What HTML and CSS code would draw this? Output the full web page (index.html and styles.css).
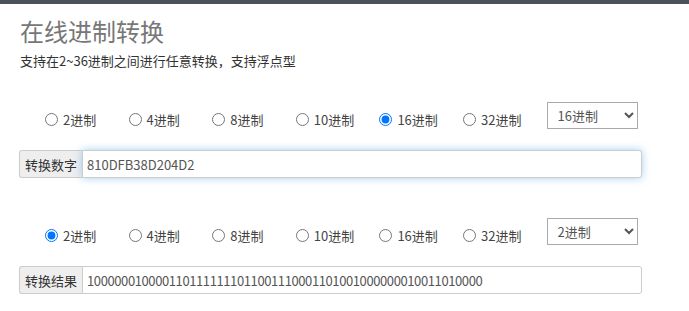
FILE: index.html
```html
<!DOCTYPE html>
<html>
    <head>
        <meta charset="utf-8">
        <meta name="viewport" content="width=device-width, initial-scale=1.0">
        <title>在线进制转换</title>
        <link rel="stylesheet" href="styles.css">
    </head>
    <body>
        <div class="topbar"></div>

        <div class="content">
            <h1 class="title">在线进制转换</h1>
            <p class="desc">支持在2~36进制之间进行任意转换，支持浮点型</p>

            <!-- source number -->
            <div class="radio-row">
                <div class="radio-list">
                    <label class="radio"><input type="radio" name="from"><span>2进制</span></label>
                    <label class="radio"><input type="radio" name="from"><span>4进制</span></label>
                    <label class="radio"><input type="radio" name="from"><span>8进制</span></label>
                    <label class="radio"><input type="radio" name="from"><span>10进制</span></label>
                    <label class="radio"><input type="radio" name="from" checked><span>16进制</span></label>
                    <label class="radio"><input type="radio" name="from"><span>32进制</span></label>
                </div>
                <select class="base-select">
                    <option>16进制</option>
                </select>
            </div>
            <div class="input-group">
                <span class="addon">转换数字</span>
                <input class="field field-focus" type="text" value="810DFB38D204D2">
            </div>

            <!-- result -->
            <div class="radio-row row-result">
                <div class="radio-list">
                    <label class="radio"><input type="radio" name="to" checked><span>2进制</span></label>
                    <label class="radio"><input type="radio" name="to"><span>4进制</span></label>
                    <label class="radio"><input type="radio" name="to"><span>8进制</span></label>
                    <label class="radio"><input type="radio" name="to"><span>10进制</span></label>
                    <label class="radio"><input type="radio" name="to"><span>16进制</span></label>
                    <label class="radio"><input type="radio" name="to"><span>32进制</span></label>
                </div>
                <select class="base-select">
                    <option>2进制</option>
                </select>
            </div>
            <div class="input-group">
                <span class="addon">转换结果</span>
                <input class="field field-result" type="text" value="1000000100001101111111011001110001101001000000010011010000">
            </div>
        </div>
    </body>
</html>
```

FILE: styles.css
```css
body {
    margin: 0;
    background: #fff;
    color: #333;
    font-family: "Noto Sans CJK SC", "Noto Sans", sans-serif;
    font-size: 13px;
}

.topbar {
    height: 4px;
    background: #4b505a;
}

.content {
    width: 623px;
    margin-left: 19px;
}

.title {
    margin: 12px 0 0 1px;
    font-size: 24px;
    line-height: 30px;
    font-weight: normal;
    color: #777;
}

.desc {
    margin: 5px 0 0 1px;
    font-size: 13px;
    line-height: 20px;
    color: #333;
}

.radio-row {
    display: flex;
    align-items: flex-start;
    height: 27px;
    margin-top: 31px;
}

.row-result {
    margin-top: 40px;
}

.radio-list {
    display: flex;
    padding: 7px 0 0 26px;
}

.radio {
    display: flex;
    align-items: center;
    flex: none;
    width: 83.6px;
    height: 20px;
    color: #444;
}

.radio input {
    width: 13px;
    height: 13px;
    margin: 1px 5px 0 0;
}

.base-select {
    width: 91px;
    height: 27px;
    padding: 0 6px;
    border: 1px solid #aaa;
    border-radius: 0;
    background: #fff;
    color: #555;
    font-family: inherit;
    font-size: 13px;
}

.input-group {
    display: flex;
    height: 28px;
    margin-top: 21px;
}

.addon {
    display: flex;
    align-items: center;
    justify-content: center;
    box-sizing: border-box;
    width: 63px;
    border: 1px solid #ccc;
    border-right: 0;
    border-radius: 3px 0 0 3px;
    background: #eee;
    color: #333;
}

.field {
    flex: 1;
    min-width: 0;
    box-sizing: border-box;
    height: 28px;
    padding: 0 4px;
    border: 1px solid #ccc;
    border-radius: 0 3px 3px 0;
    color: #555;
    font-family: inherit;
    font-size: 13px;
    outline: none;
}

.field-focus {
    box-shadow: 0 0 8px rgba(102, 175, 233, 0.6);
}

.field-result {
    letter-spacing: -0.4px;
}
```
